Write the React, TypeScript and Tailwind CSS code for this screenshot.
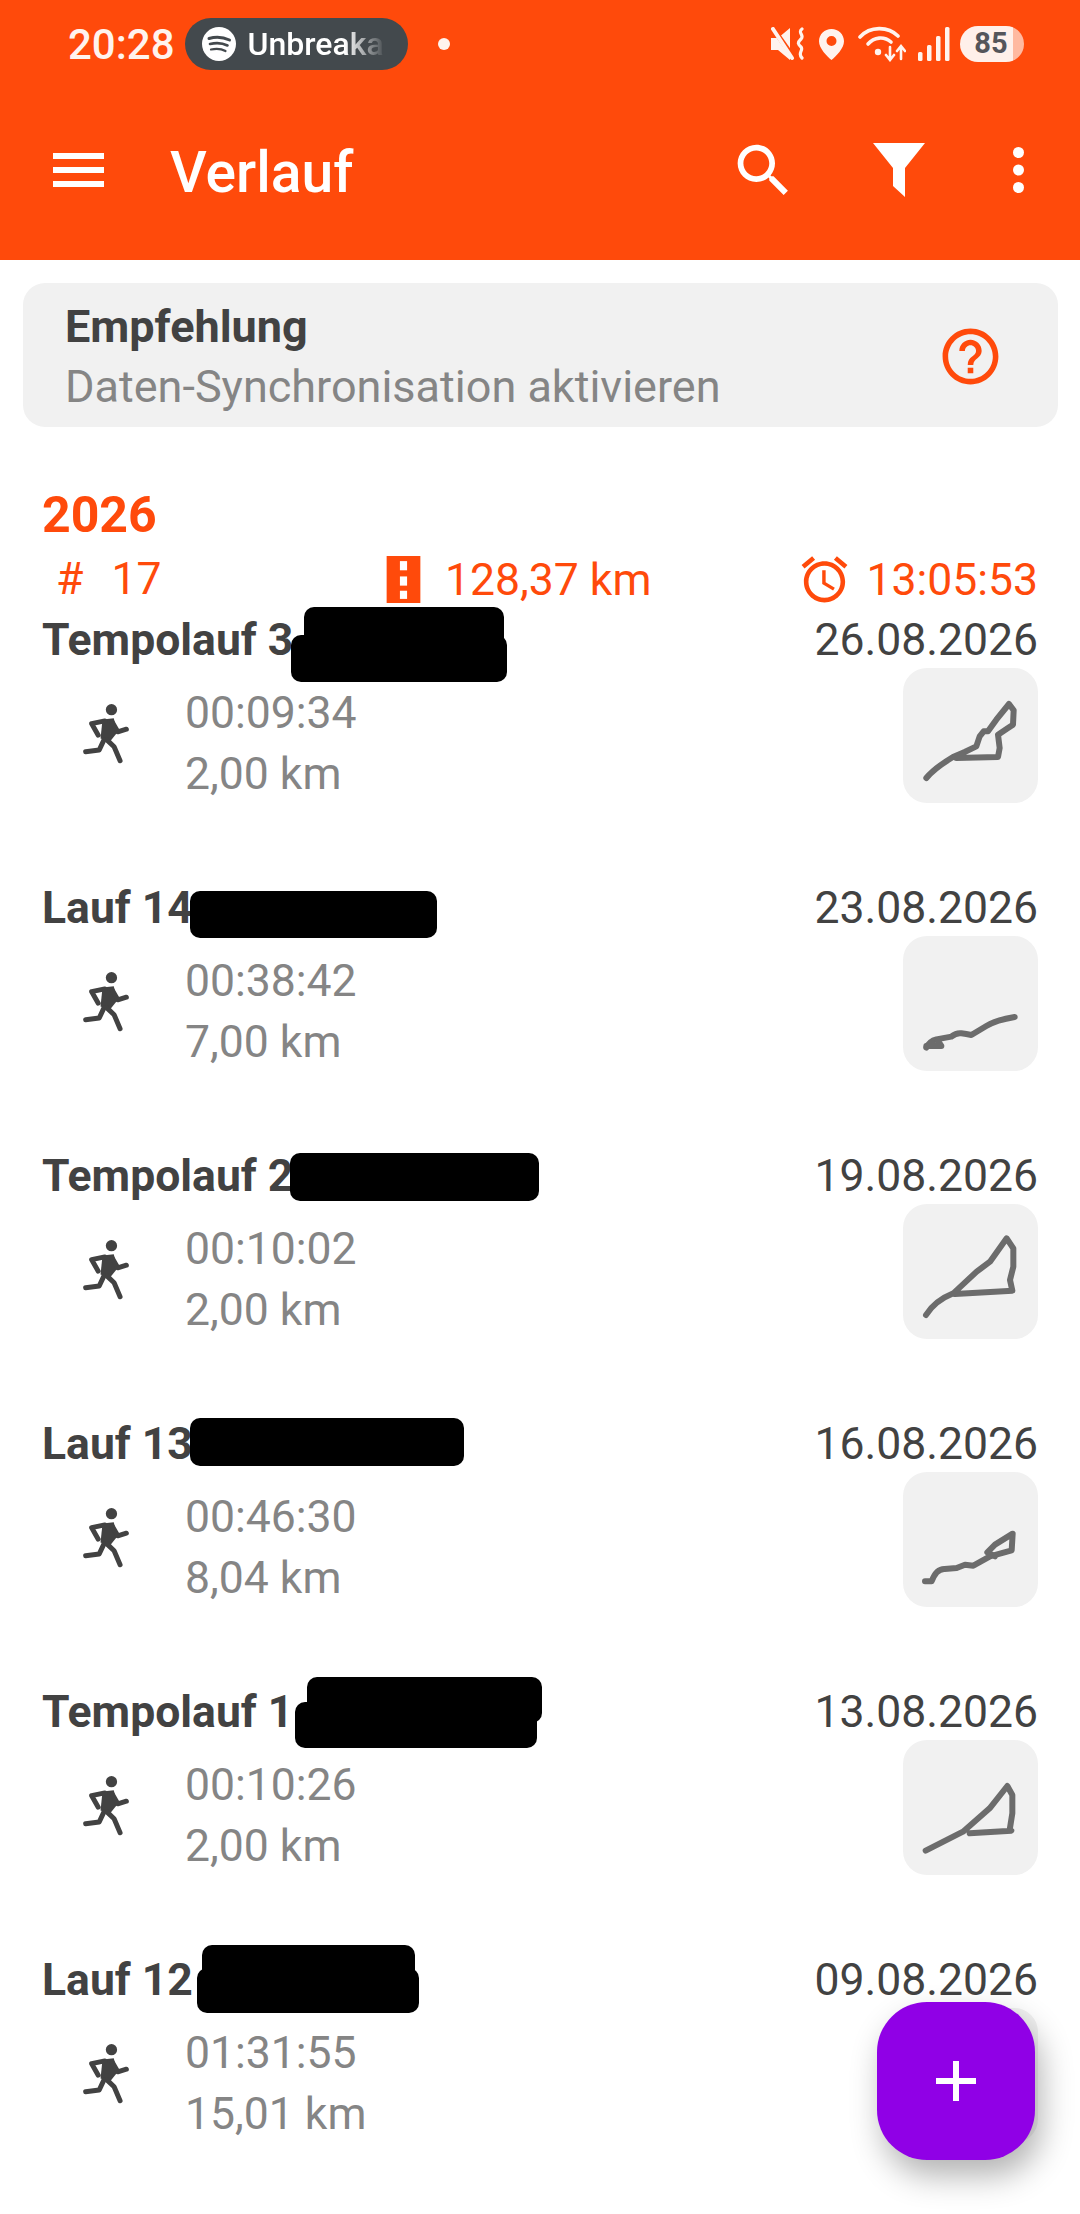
import React from "react";

type Run = {
  title: string;
  date: string;
  time: string;
  dist: string;
  route: string;
  routeExtra?: string;
  marks: string[];
};

const runs: Run[] = [
  {
    title: "Tempolauf 3",
    date: "26.08.2026",
    time: "00:09:34",
    dist: "2,00 km",
    route: "M70 330Q95 300 150 267L185 252L220 235L230 205L242 190L255 190L280 155L318 108L332 127L330 170L315 180L285 200L290 240L285 267L160 270",
    marks: ["left-[304px] top-[-3px] w-[200px] h-[46px]", "left-[291px] top-[25px] w-[216px] h-[47px]"],
  },
  {
    title: "Lauf 14",
    date: "23.08.2026",
    time: "00:38:42",
    dist: "7,00 km",
    route: "M70 335Q80 315 100 310L145 302Q160 290 175 292T205 297L250 270Q280 252 335 243",
    routeExtra: "M70 330L115 330L105 315",
    marks: ["left-[190px] top-[13px] w-[247px] h-[47px]"],
  },
  {
    title: "Tempolauf 2",
    date: "19.08.2026",
    time: "00:10:02",
    dist: "2,00 km",
    route: "M69 333Q96 290 151 268L221 203L261 173L311 103L331 133L331 188L321 228L328 260L156 270",
    marks: ["left-[290px] top-[7px] w-[249px] h-[48px]"],
  },
  {
    title: "Lauf 13",
    date: "16.08.2026",
    time: "00:46:30",
    dist: "8,04 km",
    route: "M66 328L86 328Q100 290 125 291L161 288L186 278L211 281L261 253L326 235L329 185L276 218L253 241L276 253",
    marks: ["left-[190px] top-[4px] w-[274px] h-[48px]"],
  },
  {
    title: "Tempolauf 1",
    date: "13.08.2026",
    time: "00:10:26",
    dist: "2,00 km",
    route: "M68 332L180 275L260 205L313 138L328 165L328 220L320 270L325 272L200 280",
    marks: ["left-[307px] top-[-5px] w-[235px] h-[46px]", "left-[295px] top-[20px] w-[242px] h-[46px]"],
  },
  {
    title: "Lauf 12",
    date: "09.08.2026",
    time: "01:31:55",
    dist: "15,01 km",
    route: "",
    marks: ["left-[202px] top-[-5px] w-[213px] h-[45px]", "left-[197px] top-[18px] w-[222px] h-[45px]"],
  },
];

function Spotify() {
  return (
    <svg width="34" height="34" viewBox="0 0 34 34" className="shrink-0">
      <circle cx="17" cy="17" r="17" fill="#fff" />
      <g fill="none" stroke="#43494d" strokeLinecap="round">
        <path d="M7 11.5C14 9.5 21 10 27.5 13" strokeWidth="3" />
        <path d="M8 17C14 15.5 20.5 16 25.5 18.5" strokeWidth="2.6" />
        <path d="M9 22.5C14 21.3 19.5 21.8 23.5 24" strokeWidth="2.2" />
      </g>
    </svg>
  );
}

function StatusIcons() {
  return (
    <div className="flex items-center ml-auto">
      {/* mute + vibrate */}
      <svg width="34" height="34" viewBox="0 0 34 34" className="shrink-0">
        <path d="M0 11h7L19 1v32L7 23H0z" fill="#fff3ee" />
        <path d="M1 0l24 34" stroke="#ff4a0b" strokeWidth="5" />
        <path d="M2 2l19 29" stroke="#fff3ee" strokeWidth="4" strokeLinecap="round" />
        <path d="M31 2c-5 4 3 6-1 10s-3 5 0 8-4 6 1 11" fill="none" stroke="#fff3ee" strokeWidth="3.2" strokeLinecap="round" />
      </svg>
      {/* pin */}
      <svg width="25" height="31" viewBox="0 0 25 31" className="ml-[14px] shrink-0">
        <path fillRule="evenodd" d="M12.5 0C5.6 0 0 5.4 0 12.2 0 19.5 8 27 12.5 31 17 27 25 19.5 25 12.2 25 5.4 19.4 0 12.5 0zm0 17a5 5 0 1 1 0-10 5 5 0 0 1 0 10z" fill="#fff3ee" />
      </svg>
      {/* wifi with arrows */}
      <svg width="48" height="36" viewBox="0 0 48 36" className="ml-[14px] shrink-0">
        <g fill="none" stroke="#fff3ee" strokeWidth="3.6" strokeLinecap="round">
          <path d="M2 11C12 0 30 0 40 10" />
          <path d="M10 18C16 11 26 10 33 16" />
          <path d="M32 33V21M28 29l4 5 4-5" strokeWidth="2.6" />
          <path d="M43 33V21M39 25l4-5 4 5" strokeWidth="2.6" />
        </g>
        <circle cx="20" cy="26" r="3.2" fill="#fff3ee" />
      </svg>
      {/* signal */}
      <svg width="32" height="34" viewBox="0 0 32 34" className="ml-[12px] shrink-0">
        <g fill="#fff3ee">
          <rect x="0" y="25" width="4.5" height="9" rx="1.5" />
          <rect x="9" y="18" width="4.5" height="16" rx="1.5" />
          <rect x="18" y="9" width="4.5" height="25" rx="1.5" />
          <rect x="27" y="0" width="4.5" height="34" rx="1.5" />
        </g>
      </svg>
      <div className="ml-[10px] w-[64px] h-[36px] rounded-full bg-[linear-gradient(to_right,#fff0ea_83%,#ffb9a0_83%)] flex items-center justify-center text-[29px] font-bold text-[#55555a] pr-[2px]">
        85
      </div>
    </div>
  );
}

function Runner() {
  return (
    <svg width="53" height="67" viewBox="150 60 160 200" className="shrink-0 mt-[17px] ml-[38px]">
      <circle cx="245" cy="88" r="17" fill="#424242" />
      <path d="M218 118L252 114L262 158L240 185L212 175Z" fill="#424242" />
      <g fill="none" stroke="#424242" strokeWidth="15" strokeLinecap="round" strokeLinejoin="round">
        <path d="M225 122L185 130L205 165" />
        <path d="M247 125L264 155L290 147" />
        <path d="M222 180L208 210L167 215" />
        <path d="M232 180L253 200L271 242" />
      </g>
    </svg>
  );
}

function RouteThumb({ run }: { run: Run }) {
  return (
    <div className="w-[135px] h-[135px] rounded-[24px] bg-[#f1f1f1] -mt-[2px]">
      <svg width="135" height="135" viewBox="0 0 405 405">
        <g fill="none" stroke="#6c6c6c" strokeWidth="18" strokeLinejoin="round" strokeLinecap="round">
          {run.route && <path d={run.route} />}
          {run.routeExtra && <path d={run.routeExtra} />}
        </g>
      </svg>
    </div>
  );
}

function RunRow({ run }: { run: Run }) {
  return (
    <div className="relative h-[268px] pl-[42px] pr-[42px] flex justify-between">
      <div>
        <div className="h-[60px] leading-[60px] font-bold text-[#424242]">{run.title}</div>
        <div className="flex mt-[13px]">
          <Runner />
          <div className="ml-[52px] text-[#858585] leading-[61px]">
            <div>{run.time}</div>
            <div>{run.dist}</div>
          </div>
        </div>
      </div>
      <div className="flex flex-col items-end">
        <div className="h-[60px] leading-[60px] text-[#424242]">{run.date}</div>
        <RouteThumb run={run} />
      </div>
      {/* blacked out part of the name */}
      {run.marks.map((m) => (
        <div key={m} className={"absolute bg-black rounded-[10px] " + m} />
      ))}
    </div>
  );
}

export default function App() {
  return (
    <div className="relative w-[1080px] h-[2214px] overflow-hidden bg-white text-[44.5px] [font-family:Roboto,sans-serif]">
      <header className="h-[260px] bg-[#ff4a0b] text-white">
        <div className="h-[88px] flex items-center pl-[68px] pr-[56px]">
          <span className="text-[42px] font-medium text-[#fff3ee]">20:28</span>
          <div className="ml-[10px] w-[223px] h-[52px] rounded-full bg-[#43494d] flex items-center pl-[17px]">
            <Spotify />
            <span className="ml-[12px] w-[138px] overflow-hidden whitespace-nowrap text-[32px] font-medium [mask-image:linear-gradient(to_right,black_70%,transparent)]">
              Unbreaka
            </span>
          </div>
          <div className="ml-[30px] w-[12px] h-[12px] rounded-full bg-[#fff3ee]" />
          <StatusIcons />
        </div>
        <div className="h-[172px] pb-[8px] flex items-center pl-[53px] pr-[56px]">
          <svg width="51" height="34" viewBox="0 0 51 34" className="shrink-0">
            <g fill="#fff">
              <rect width="51" height="6" y="0" />
              <rect width="51" height="6" y="14" />
              <rect width="51" height="6" y="28" />
            </g>
          </svg>
          <span className="ml-[66px] mt-[5px] text-[57px] font-medium">Verlauf</span>
          <svg width="69" height="69" viewBox="0 0 24 24" fill="#fff" className="ml-auto shrink-0">
            <path d="M15.5 14h-.79l-.28-.27C15.41 12.59 16 11.11 16 9.5 16 5.91 13.09 3 9.5 3S3 5.91 3 9.5 5.91 16 9.5 16c1.61 0 3.09-.59 4.23-1.57l.27.28v.79l5 4.99L20.49 19l-4.99-5zm-6 0C7.01 14 5 11.99 5 9.5S7.01 5 9.5 5 14 7.01 14 9.5 11.99 14 9.5 14z" />
          </svg>
          <svg width="52" height="54" viewBox="0 0 52 54" fill="#fff" className="ml-[75px] shrink-0">
            <path d="M0 0H52L32 25V54L20 43V25Z" />
          </svg>
          <svg width="11" height="46" viewBox="0 0 11 46" fill="#fff" className="ml-[88px] shrink-0">
            <circle cx="5.5" cy="5.5" r="5.5" />
            <circle cx="5.5" cy="23" r="5.5" />
            <circle cx="5.5" cy="40.5" r="5.5" />
          </svg>
        </div>
      </header>

      <div className="mt-[23px] ml-[23px] w-[1035px] h-[144px] rounded-[22px] bg-[#f1f1f1] pl-[42px] pr-[54px] flex items-center justify-between">
        <div className="mt-[3px] text-[45px]">
          <div className="leading-[60px] font-bold text-[#424242]">Empfehlung</div>
          <div className="leading-[60px] text-[#858585]">Daten-Synchronisation aktivieren</div>
        </div>
        <svg width="67" height="67" viewBox="0 0 24 24" fill="#ff4a0b" className="shrink-0 mt-[2px]">
          <path d="M11 18h2v-2h-2v2zm1-16C6.48 2 2 6.48 2 12s4.48 10 10 10 10-4.48 10-10S17.52 2 12 2zm0 18c-4.41 0-8-3.59-8-8s3.59-8 8-8 8 3.59 8 8-3.59 8-8 8zm0-14c-2.21 0-4 1.79-4 4h2c0-1.1.9-2 2-2s2 .9 2 2c0 2-3 1.75-3 5h2c0-2.25 3-2.5 3-5 0-2.21-1.79-4-4-4z" />
        </svg>
      </div>

      <div className="mt-[58px] pl-[42px] leading-[60px] text-[50px] font-bold text-[#ff4a0b]">2026</div>
      <div className="mt-[4px] ml-[42px] mr-[42px] h-[61px] grid grid-cols-[337px_418px_1fr] text-[#ff4a0b] leading-[60px]">
        <div className="flex">
          <span className="ml-[14px]">#</span>
          <span className="ml-[28px]">17</span>
        </div>
        <div className="flex items-center">
          <svg width="35" height="47" viewBox="0 0 33 46" className="ml-[7px] shrink-0">
            <rect width="33" height="46" fill="#ff4a0b" />
            <g fill="#fff">
              <rect x="13" y="5" width="7" height="9" />
              <rect x="13" y="20" width="7" height="9" />
              <rect x="13" y="34" width="7" height="8" />
            </g>
          </svg>
          <span className="ml-[24px]">128,37 km</span>
        </div>
        <div className="flex items-center justify-between">
          <svg width="55" height="55" viewBox="0 0 24 24" fill="#ff4a0b" className="shrink-0">
            <path d="M22 5.72l-4.6-3.86-1.29 1.53 4.6 3.86L22 5.72zM7.88 3.39L6.6 1.86 2 5.71l1.29 1.53 4.59-3.85zM12.5 8H11v6l4.75 2.85.75-1.23-4-2.37V8zM12 4c-4.97 0-9 4.03-9 9s4.03 9 9 9 9-4.03 9-9-4.03-9-9-9zm0 16c-3.87 0-7-3.13-7-7s3.13-7 7-7 7 3.13 7 7-3.13 7-7 7z" />
          </svg>
          <span>13:05:53</span>
        </div>
      </div>

      {runs.map((run) => (
        <RunRow key={run.date} run={run} />
      ))}

      <button className="absolute left-[877px] top-[2002px] w-[158px] h-[158px] rounded-[50px] bg-[#9000e6] shadow-[6px_16px_32px_rgba(0,0,0,0.3)] flex items-center justify-center">
        <svg width="40" height="40" viewBox="0 0 40 40" fill="#fff">
          <rect x="17" y="0" width="6" height="40" />
          <rect x="0" y="17" width="40" height="6" />
        </svg>
      </button>
    </div>
  );
}
